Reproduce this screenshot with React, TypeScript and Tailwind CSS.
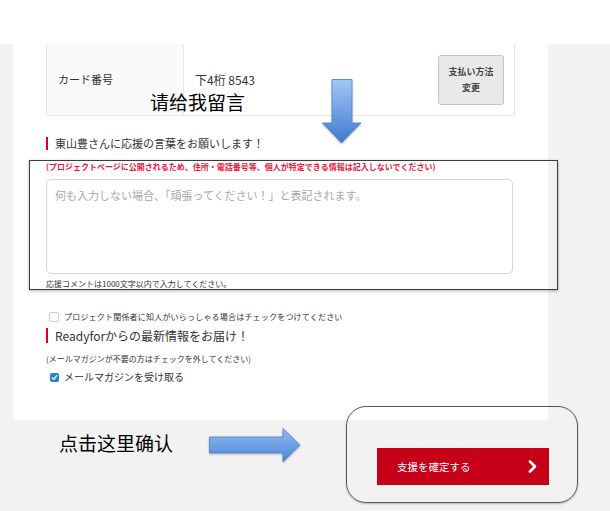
import React from 'react';

const jp = { fontFamily: '"Noto Sans CJK JP", "Noto Sans", sans-serif' };
const sc = { fontFamily: '"Noto Sans CJK SC", "Noto Sans", sans-serif' };

const SectionTitle: React.FC<{ text: string; size: string; barH: string }> = ({ text, size, barH }) => (
  <div className={`flex items-center gap-[7px] ${barH}`}>
    <span className={`w-[2px] ${barH} bg-[#e60012]`} />
    <span className={`${size} leading-none text-[#333]`}>{text}</span>
  </div>
);

const DownArrow = () => (
  <svg width="40" height="65" viewBox="0 0 40 65" className="absolute left-[322px] top-[79px] drop-shadow-[0_1px_1px_rgba(0,0,0,0.25)]">
    <defs>
      <linearGradient id="gd" x1="0" y1="0" x2="0" y2="1">
        <stop offset="0" stopColor="#a3c6f6" />
        <stop offset="1" stopColor="#3f7ad0" />
      </linearGradient>
    </defs>
    <path d="M10 0.5 H30 V44 H39 L19.5 64 L0.5 44 H10 Z" fill="url(#gd)" stroke="#4a80cc" strokeWidth="0.8" />
  </svg>
);

const RightArrow = () => (
  <svg width="92" height="35" viewBox="0 0 92 35" className="absolute left-[209px] top-[428px] drop-shadow-[0_1px_1px_rgba(0,0,0,0.25)]">
    <defs>
      <linearGradient id="gr" x1="0" y1="0" x2="0" y2="1">
        <stop offset="0" stopColor="#93bbf1" />
        <stop offset="1" stopColor="#4b85d6" />
      </linearGradient>
    </defs>
    <path d="M0.5 9 H74 V0.5 L91 17 L74 34 V25 H0.5 Z" fill="url(#gr)" stroke="#4a80cc" strokeWidth="0.8" />
  </svg>
);

export default function App() {
  return (
    <div className="relative w-full min-h-[511px] bg-[#f2f2f2] overflow-hidden" style={jp}>
      <div className="h-[44px] bg-white" />

      <div className="ml-[13px] w-[535px] bg-white pl-[33px] pb-[37px]">
        {/* card table */}
        <div className="flex h-[72px] w-[469px] border-x border-b border-[#e6e6e6]">
          <div className="flex w-[137px] items-center border-r border-[#e6e6e6] bg-[#fafafa] pl-[11px] text-[11px] text-[#333]">
            カード番号
          </div>
          <div className="flex flex-1 items-center justify-between pl-[11px] pr-[10px]">
            <span className="text-[12px] text-[#333]">下4桁 8543</span>
            <button className="flex h-[50px] w-[66px] flex-col items-center justify-center rounded-[3px] border border-[#c4c4c4] bg-[#e9e9e9] text-[9px] font-bold leading-[16px] text-[#444]">
              <span>支払い方法</span>
              <span>変更</span>
            </button>
          </div>
        </div>

        <div className="mt-[21px]">
          <SectionTitle text="東山豊さんに応援の言葉をお願いします！" size="text-[11px]" barH="h-[13px]" />
        </div>

        {/* annotated comment block */}
        <div className="mt-[10px] ml-[-17px] w-[529px] border border-[#3a3a3a] pl-[16px] shadow-[0_1px_3px_rgba(0,0,0,0.3)]">
          <p className="text-[8px] font-bold leading-[12px] text-[#f2133c]">
            (プロジェクトページに公開されるため、住所・電話番号等、個人が特定できる情報は記入しないでください)
          </p>
          <textarea
            className="mt-[6px] block h-[95px] w-[467px] resize-none rounded-[5px] border border-[#d6d6d6] px-[8px] py-[8px] text-[11px] leading-[14px] text-[#333] placeholder:text-[#a8a8a8] outline-none"
            style={jp}
            placeholder="何も入力しない場合、「頑張ってください！」と表記されます。"
          />
          <p className="mt-[5px] text-[8px] leading-[10px] text-[#333]">応援コメントは1000文字以内で入力してください。</p>
        </div>

        <label className="mt-[21px] flex h-[11px] items-center gap-[5px] pl-[3px]">
          <span className="h-[10px] w-[10px] rounded-[2px] border border-[#cfcfcf] bg-white" />
          <span className="text-[8px] leading-none tracking-[0.2px] text-[#333]">
            プロジェクト関係者に知人がいらっしゃる場合はチェックをつけてください
          </span>
        </label>

        <div className="mt-[6px]">
          <SectionTitle text="Readyforからの最新情報をお届け！" size="text-[12px]" barH="h-[15px]" />
        </div>

        <p className="mt-[11px] text-[8px] leading-[10px] text-[#333]">(メールマガジンが不要の方はチェックを外してください)</p>

        <label className="mt-[7px] flex h-[12px] items-center gap-[5px] pl-[4px]">
          <span className="flex h-[9px] w-[9px] items-center justify-center rounded-[2px] bg-[#2a7de1]">
            <svg width="7" height="7" viewBox="0 0 8 8">
              <path d="M1.3 4.2 L3.2 6 L6.8 1.6" fill="none" stroke="white" strokeWidth="1.4" strokeLinecap="round" strokeLinejoin="round" />
            </svg>
          </span>
          <span className="text-[10px] leading-none text-[#333]">メールマガジンを受け取る</span>
        </label>
      </div>

      <div className="ml-[13px] flex w-[536px] justify-end pt-[28px]">
        <button className="flex h-[37px] w-[172px] items-center justify-between bg-[#c70019] pl-[20px] pr-[12px] text-[10.5px] text-white">
          <span>支援を確定する</span>
          <svg width="9" height="13" viewBox="0 0 9 13">
            <path d="M2 1.5 L7 6.5 L2 11.5" fill="none" stroke="white" strokeWidth="2.6" strokeLinecap="round" strokeLinejoin="round" />
          </svg>
        </button>
      </div>

      {/* annotations */}
      <span className="absolute left-[150px] top-[90px] text-[19px] leading-[24px] text-black" style={sc}>请给我留言</span>
      <DownArrow />
      <span className="absolute left-[59px] top-[431px] text-[19px] leading-[24px] text-black" style={sc}>点击这里确认</span>
      <RightArrow />
      <div className="absolute left-[346px] top-[406px] h-[97px] w-[232px] rounded-[20px] border-[1.5px] border-[#555] shadow-[0_1px_2px_rgba(0,0,0,0.25)]" />
    </div>
  );
}
